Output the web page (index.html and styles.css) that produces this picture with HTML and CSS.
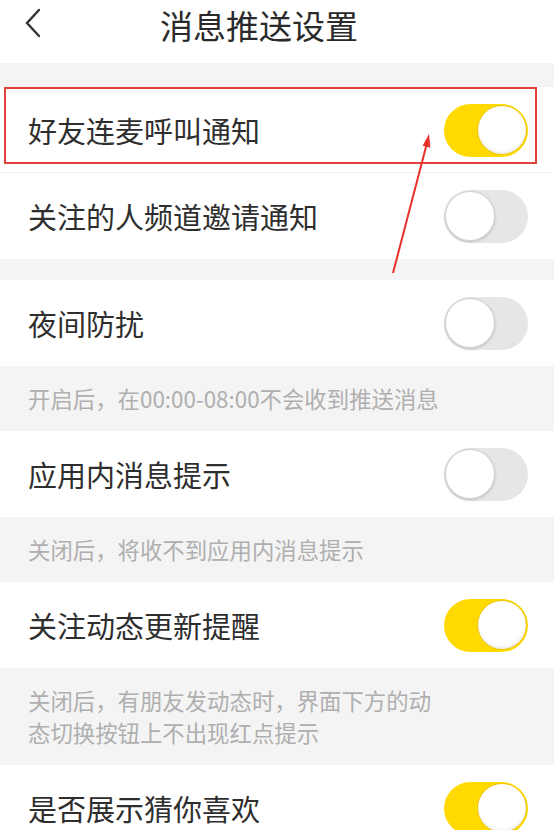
FILE: index.html
```html
<!DOCTYPE html>
<html lang="zh-CN">
<head>
<meta charset="utf-8">
<title>消息推送设置</title>
<link rel="stylesheet" href="styles.css">
</head>
<body>
<div class="page">
  <header class="header">
    <svg class="back" width="18" height="30" viewBox="0 0 18 30">
      <path d="M15 2 L3 15 L15 28" fill="none" stroke="#333" stroke-width="2.4" stroke-linecap="round" stroke-linejoin="miter"/>
    </svg>
    <h1 class="title">消息推送设置</h1>
  </header>

  <div class="band"></div>
  <section class="group">
    <div class="row row-divider">
      <span class="label">好友连麦呼叫通知</span>
      <span class="switch on"><span class="knob"></span></span>
    </div>
    <div class="row">
      <span class="label">关注的人频道邀请通知</span>
      <span class="switch"><span class="knob"></span></span>
    </div>
  </section>

  <div class="band band-small"></div>
  <div class="row">
    <span class="label">夜间防扰</span>
    <span class="switch"><span class="knob"></span></span>
  </div>
  <p class="help">开启后，在00:00-08:00不会收到推送消息</p>

  <div class="row">
    <span class="label">应用内消息提示</span>
    <span class="switch"><span class="knob"></span></span>
  </div>
  <p class="help">关闭后，将收不到应用内消息提示</p>

  <div class="row">
    <span class="label">关注动态更新提醒</span>
    <span class="switch on"><span class="knob"></span></span>
  </div>
  <p class="help help-wrap">关闭后，有朋友发动态时，界面下方的动态切换按钮上不出现红点提示</p>

  <div class="row">
    <span class="label">是否展示猜你喜欢</span>
    <span class="switch on"><span class="knob"></span></span>
  </div>

  <div class="highlight"></div>
  <svg class="arrow" width="554" height="830" viewBox="0 0 554 830">
    <line x1="393" y1="273" x2="427" y2="143" stroke="#e8302c" stroke-width="2"/>
    <polygon points="429,134 430.4,147.8 422.6,145.8" fill="#e8302c"/>
  </svg>
</div>
</body>
</html>
```

FILE: styles.css
```css
* { box-sizing: border-box; }
html, body {
  margin: 0;
  padding: 0;
  background: #ffffff;
}
body {
  font-family: "Noto Sans CJK SC", "Noto Sans", sans-serif;
  color: #2e2e2e;
  overflow: hidden;
}
.page {
  position: relative;
  width: 554px;
  height: 830px;
  overflow: hidden;
}
.header {
  height: 63px;
  display: flex;
  align-items: flex-start;
  padding-left: 24px;
}
.back {
  margin-top: 8px;
  flex: none;
}
.title {
  margin: 0 0 0 118px;
  font-size: 33px;
  font-weight: 400;
  line-height: 50px;
  color: #2a2a2a;
}
.band {
  height: 24px;
  background: #f4f4f4;
}
.band-small {
  height: 21px;
}
.row {
  height: 86px;
  display: flex;
  align-items: center;
  justify-content: space-between;
  padding: 0 26px 0 28px;
  background: #fff;
}
.row-divider {
  box-shadow: inset 0 -1px 0 #f0f0f0;
}
.label {
  font-size: 29px;
  line-height: 40px;
  color: #2e2e2e;
}
.switch {
  width: 84px;
  height: 53px;
  border-radius: 27px;
  background: #e6e6e6;
  display: flex;
  align-items: center;
  justify-content: flex-start;
  padding: 0 1px;
  flex: none;
}
.switch .knob {
  width: 50px;
  height: 50px;
  border-radius: 50%;
  background: #fff;
  border: 1.5px solid #d2d2d2;
  box-shadow: 0 1px 3px rgba(0,0,0,0.18);
}
.switch.on {
  background: #ffd900;
  justify-content: flex-end;
}
.switch.on .knob {
  border-color: #e9c400;
  box-shadow: inset 0 -2px 3px rgba(0,0,0,0.08);
}
.help {
  margin: 0;
  background: #f4f4f4;
  padding: 16px 28px 17px;
  font-size: 22.4px;
  line-height: 32px;
  color: #afafaf;
}
.help-wrap {
  padding-right: 106px;
}
.highlight {
  position: absolute;
  left: 4px;
  top: 87px;
  width: 533px;
  height: 77px;
  border: 2px solid #e2403c;
}
.arrow {
  position: absolute;
  left: 0;
  top: 0;
  pointer-events: none;
}
```
